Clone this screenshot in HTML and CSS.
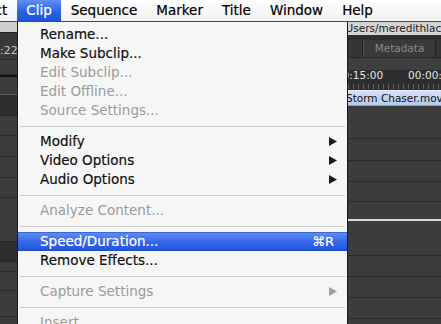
FILE: index.html
```html
<!DOCTYPE html>
<html>
<head>
<meta charset="utf-8">
<link rel="stylesheet" href="styles.css">
</head>
<body>
<div class="screen">
  <div class="menubar">
    <span class="mb-item mb-first">Project</span>
    <span class="mb-item mb-active">Clip</span>
    <span class="mb-item">Sequence</span>
    <span class="mb-item">Marker</span>
    <span class="mb-item">Title</span>
    <span class="mb-item">Window</span>
    <span class="mb-item">Help</span>
  </div>

  <div class="app">
    <div class="strip">
      <div class="s-title"></div>
      <div class="s-time">:22</div>
      <div class="s-row h15"></div>
      <div class="s-black"></div>
      <div class="s-row h18 light"></div>
      <div class="s-dark h21"></div>
      <div class="s-row h20"></div>
      <div class="s-row h21"></div>
      <div class="s-row h21"></div>
      <div class="s-row h20"></div>
      <div class="s-row h44"></div>
      <div class="s-dark h20"></div>
      <div class="s-row h10"></div>
      <div class="s-row h19"></div>
      <div class="s-row h26"></div>
    </div>
    <div class="hidden-col"></div>
    <div class="panel">
      <div class="p-title"><span class="p-path">/Users/meredithlacey</span></div>
      <div class="p-gap"></div>
      <div class="p-tabs">
        <span class="p-tab-stub"></span>
        <span class="p-tab">Metadata</span>
      </div>
      <div class="p-band"></div>
      <div class="p-time">
        <div class="p-codes"><span class="p-code1">00:00:15:00</span><span>00:00:30:00</span></div>
        <div class="p-ticks"></div>
      </div>
      <div class="p-clip"><span class="p-clipname">Storm Chaser.mov</span></div>
      <div class="p-row h33"></div>
      <div class="p-row h22"></div>
      <div class="p-row h21"></div>
      <div class="p-row h20"></div>
      <div class="p-row h19 white"></div>
      <div class="p-row h35"></div>
      <div class="p-row h21"></div>
      <div class="p-row h21"></div>
      <div class="p-row h21"></div>
      <div class="p-row h10"></div>
    </div>
  </div>

  <div class="dropdown">
    <div class="mi">Rename...</div>
    <div class="mi">Make Subclip...</div>
    <div class="mi off">Edit Subclip...</div>
    <div class="mi off">Edit Offline...</div>
    <div class="mi off">Source Settings...</div>
    <div class="sep"></div>
    <div class="mi">Modify<svg class="arrow" viewBox="0 0 8 9" width="8" height="9"><polygon points="0,0 8,4.5 0,9"/></svg></div>
    <div class="mi">Video Options<svg class="arrow" viewBox="0 0 8 9" width="8" height="9"><polygon points="0,0 8,4.5 0,9"/></svg></div>
    <div class="mi">Audio Options<svg class="arrow" viewBox="0 0 8 9" width="8" height="9"><polygon points="0,0 8,4.5 0,9"/></svg></div>
    <div class="sep"></div>
    <div class="mi off">Analyze Content...</div>
    <div class="sep"></div>
    <div class="mi sel">Speed/Duration...<span class="key">⌘R</span></div>
    <div class="mi">Remove Effects...</div>
    <div class="sep"></div>
    <div class="mi off">Capture Settings<svg class="arrow" viewBox="0 0 8 9" width="8" height="9"><polygon points="0,0 8,4.5 0,9"/></svg></div>
    <div class="sep"></div>
    <div class="mi off">Insert</div>
  </div>
</div>
</body>
</html>
```

FILE: styles.css
```css
* { box-sizing: border-box; }
html, body { margin: 0; padding: 0; }
body {
  width: 441px;
  height: 324px;
  overflow: hidden;
  background: #3b3b3b;
  font-family: "DejaVu Sans", "Noto Sans", sans-serif;
}
.screen {
  position: relative;
  width: 441px;
  height: 324px;
  overflow: hidden;
}

/* menubar */
.menubar {
  height: 22px;
  display: flex;
  align-items: stretch;
  background: linear-gradient(#ffffff, #f1f1f1);
  border-bottom: 1px solid #4a4a4a;
  font-size: 13.5px;
  color: #000;
  white-space: nowrap;
  -webkit-text-stroke: 0.2px currentColor;
}
.mb-item {
  padding: 0 9.5px;
  line-height: 21px;
}
.mb-first { margin-left: -48.5px; }
.mb-active {
  color: #fff;
  background: linear-gradient(#5f8ff3, #2a5fe4 60%, #1f52d8);
}

/* background application */
.app {
  display: grid;
  grid-template-columns: 17px 330px 94px;
  height: 302px;
}
.strip, .panel {
  display: flex;
  flex-direction: column;
  overflow: hidden;
}
.s-title { height: 11px; background: #cfcfcf; border-bottom: 1px solid #222; flex: none; }
.s-time {
  height: 27px;
  flex: none;
  background: #3a3a3a;
  border-bottom: 1px solid #2a2a2a;
  color: #c4c4c4;
  font-size: 11px;
  line-height: 11px;
  padding-top: 12px;
  text-align: right;
  padding-right: 1px;
  white-space: nowrap;
  overflow: hidden;
}
.s-row { flex: none; background: #3c3c3c; border-bottom: 1px solid #2b2b2b; }
.s-row.light { border-bottom-color: #5c5c5c; }
.s-black { height: 2px; background: #111; flex: none; }
.s-dark { flex: none; background: #2d2d2d; border-bottom: 1px solid #262626; }
.h10 { height: 10px; }
.h15 { height: 15px; }
.h18 { height: 18px; }
.h19 { height: 19px; }
.h20 { height: 20px; }
.h21 { height: 21px; }
.h22 { height: 22px; }
.h26 { height: 26px; }
.h33 { height: 33px; }
.h35 { height: 35px; }
.h44 { height: 44px; }

.hidden-col { background: #3b3b3b; }

.panel { border-left: 1px solid #111; }
.p-title {
  height: 13px;
  flex: none;
  background: #d3d3d3;
  color: #222;
  font-size: 10.5px;
  line-height: 13px;
  white-space: nowrap;
  overflow: visible;
}
.p-path { display: inline-block; margin-left: -6px; }
.p-gap { height: 5px; flex: none; background: #2e2e2e; }
.p-tabs {
  height: 18px;
  flex: none;
  background: #353535;
  display: flex;
  align-items: stretch;
  border-bottom: 1px solid #262626;
}
.p-tab-stub {
  width: 15px;
  border-right: 1px solid #222;
  box-shadow: 1px 0 0 #4a4a4a;
}
.p-tab {
  width: 73px;
  border-left: 1px solid #505050;
  border-right: 1px solid #222;
  background: #3a3a3a;
  color: #8a8a8a;
  font-size: 10.5px;
  line-height: 17px;
  text-align: center;
  white-space: nowrap;
}
.p-band { height: 12px; flex: none; background: #3e3e3e; }
.p-time {
  height: 20px;
  flex: none;
  background: #2e2e2e;
  overflow: hidden;
}
.p-codes {
  display: flex;
  gap: 25px;
  color: #e2e2e2;
  font-size: 10.5px;
  line-height: 11px;
  white-space: nowrap;
}
.p-code1 { margin-left: -29px; }
.p-ticks {
  height: 5px;
  margin-top: 3px;
  background: repeating-linear-gradient(90deg, #777 0 1px, transparent 1px 5px);
  opacity: 0.7;
}
.p-clip {
  height: 16px;
  flex: none;
  background: linear-gradient(#d3e0f4, #b6c9ea);
  border-top: 1px solid #e6eefa;
  border-bottom: 1px solid #8ea4c8;
  color: #111;
  font-size: 10.5px;
  line-height: 14px;
  white-space: nowrap;
  overflow: hidden;
}
.p-clipname { display: inline-block; margin-left: -2px; }
.p-row { flex: none; background: #3c3c3c; border-bottom: 1px solid #2a2a2a; }
.p-row.white { border-bottom: 2px solid #d8d8d8; }

/* dropdown menu */
.dropdown {
  position: absolute;
  left: 17px;
  top: 22px;
  width: 331px;
  height: 310px;
  background: #f6f6f6;
  border-left: 1px solid #1b1b1b;
  border-right: 1px solid #1b1b1b;
  padding-top: 3px;
  font-size: 13.5px;
  color: #111;
  white-space: nowrap;
  -webkit-text-stroke: 0.2px currentColor;
}
.mi {
  height: 19px;
  line-height: 19px;
  padding-left: 22px;
  padding-right: 10px;
  display: flex;
  align-items: center;
}
.mi.off { color: #9b9b9b; -webkit-text-stroke: 0; }
.mi.sel {
  color: #fff;
  background: linear-gradient(#5d8bf2, #3466ea 55%, #2255de);
  border-top: 1px solid #3f66d6;
  border-bottom: 1px solid #1e4bc8;
}
.arrow { margin-left: auto; fill: #1a1a1a; }
.mi.off .arrow { fill: #a0a0a0; }
.key {
  margin-left: auto;
  margin-right: 3px;
  font-size: 13px;
}
.sep {
  height: 12px;
  position: relative;
}
.sep::after {
  content: "";
  position: absolute;
  left: 2px;
  right: 2px;
  top: 6px;
  height: 1px;
  background: #cdcdcd;
}
```
